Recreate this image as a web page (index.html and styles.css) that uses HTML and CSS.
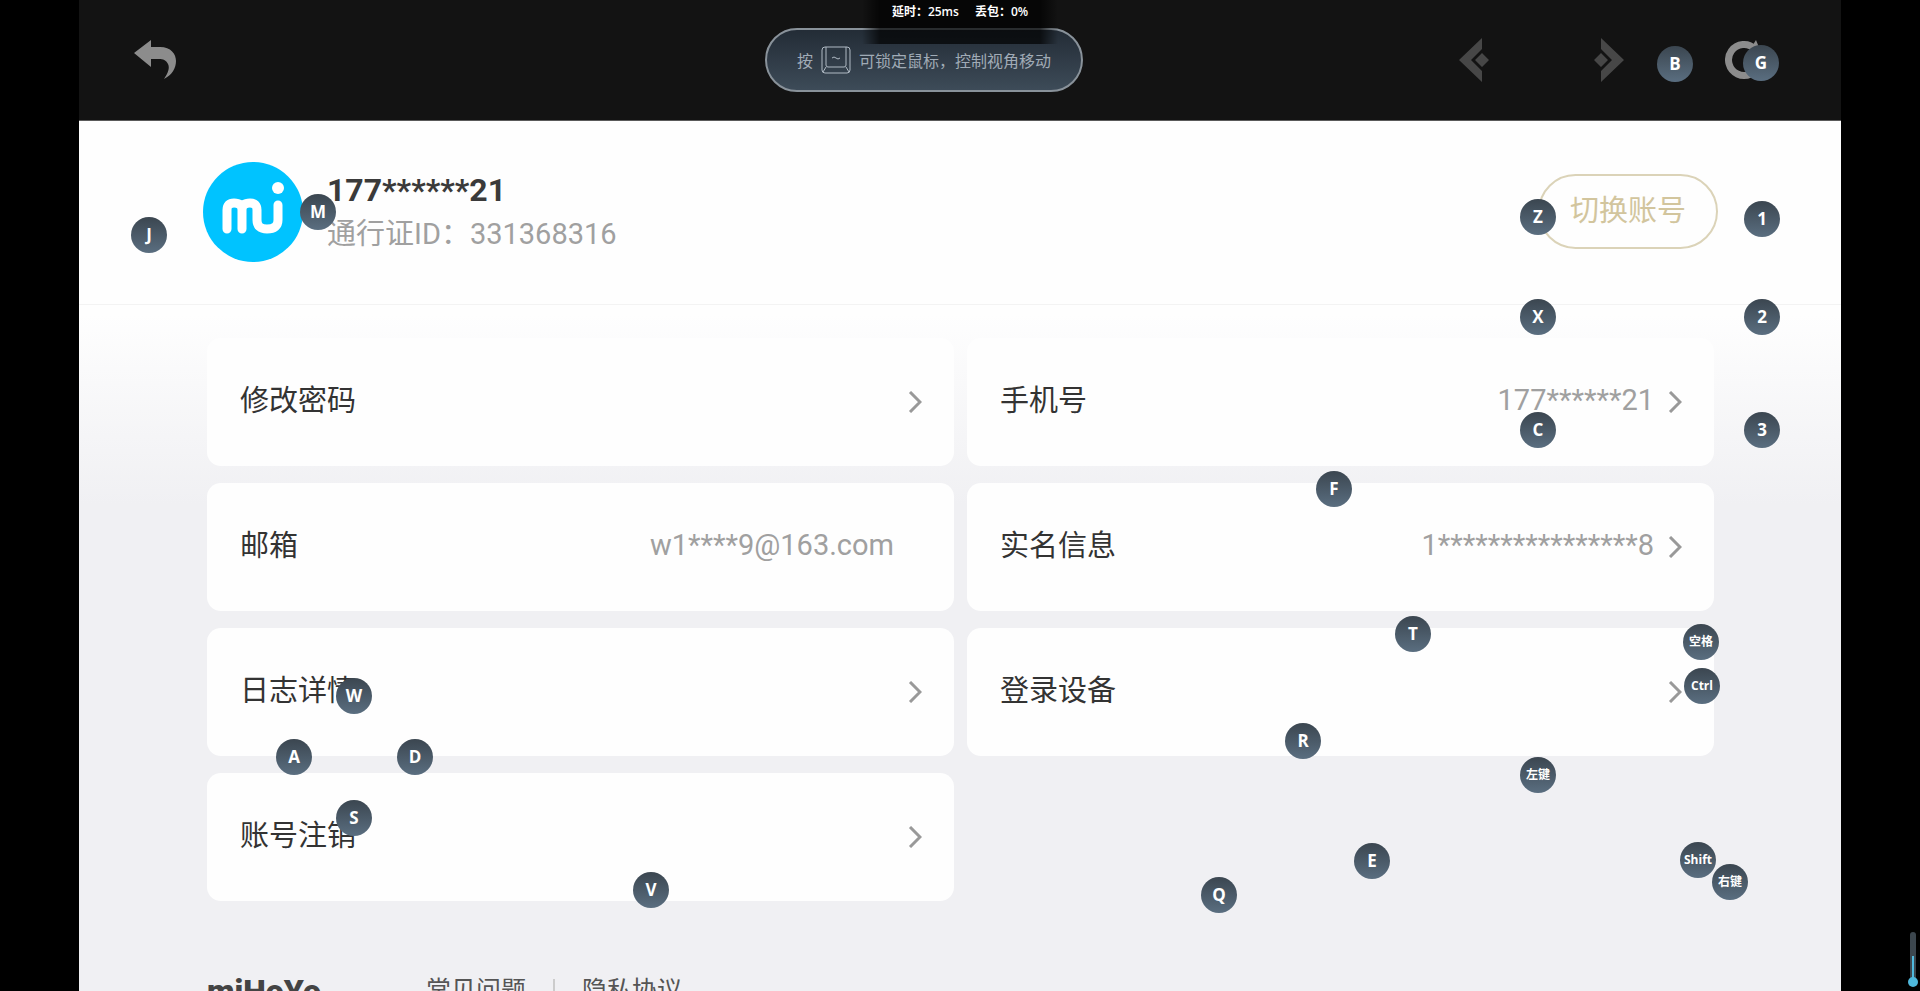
FILE: index.html
```
<!DOCTYPE html>
<html lang="zh-CN">

<head>
    <meta charset="UTF-8">
    <meta name="viewport" content="width=device-width, initial-scale=1.0">
    <title>账号管理</title>
    <link rel="stylesheet" href="styles.css">
</head>

<body>
    <div class="stage">
        <header class="topbar">
            <button class="icon-btn" aria-label="返回">
                <svg width="42" height="40" viewBox="0 0 42 40">
                    <path fill="#8c8c8c" d="M0 13 L17 0 V7 H26 C37 7 42 14 42 21 C42 28 38 35 30 39 C34 33 36 28 34 24 C32 20 29 19 25 19 H17 V27 Z" />
                </svg>
            </button>
            <nav class="topbar-nav">
                <button class="icon-btn" aria-label="后退">
                    <svg width="32" height="44" viewBox="0 0 32 44">
                        <path fill="#474747" d="M23 0 V11 L12 22 L23 33 V44 L0 22 Z M23 15 L30 22 L23 29 L16 22 Z" />
                    </svg>
                </button>
                <button class="icon-btn" aria-label="前进">
                    <svg width="32" height="44" viewBox="0 0 32 44">
                        <path fill="#474747" d="M9 0 V11 L20 22 L9 33 V44 L32 22 Z M9 15 L2 22 L9 29 L16 22 Z" />
                    </svg>
                </button>
                <button class="icon-btn" aria-label="刷新">
                    <svg width="40" height="40" viewBox="0 0 40 40">
                        <path fill="none" stroke="#8c8c8c" stroke-width="7" d="M30 9 A15.5 15.5 0 1 0 34 24" />
                        <path fill="#8c8c8c" d="M31 0 L37 15 L23 13 Z" />
                    </svg>
                </button>
            </nav>
        </header>

        <section class="profile">
            <svg class="avatar" width="100" height="100" viewBox="0 0 100 100">
                <circle cx="50" cy="50" r="50" fill="#00c3ff" />
                <path fill="none" stroke="#fff" stroke-width="9" stroke-linecap="round" stroke-linejoin="round" d="M24 67 V48 Q24 41 31 41 Q39 41 39 48 V67 M39 48 Q39 41 47 41 Q54 41 54 48 V58 Q54 67 64 67 Q75 67 75 58 V43" />
                <circle cx="75" cy="26" r="6" fill="#fff" />
            </svg>
            <div class="profile-info">
                <h1>177******21</h1>
                <p>通行证ID：331368316</p>
            </div>
            <button class="switch-btn">切换账号</button>
        </section>

        <main class="account">
            <div class="cards">
                <a class="card" href="#">
                    <span class="label">修改密码</span>
                    <svg class="chevron" viewBox="0 0 14 22"><path d="M2 1 L12 11 L2 21" /></svg>
                </a>
                <a class="card" href="#">
                    <span class="label">手机号</span>
                    <span class="value">177******21</span>
                    <svg class="chevron" viewBox="0 0 14 22"><path d="M2 1 L12 11 L2 21" /></svg>
                </a>
                <div class="card">
                    <span class="label">邮箱</span>
                    <span class="value">w1****9@163.com</span>
                    <span class="chevron"></span>
                </div>
                <a class="card" href="#">
                    <span class="label">实名信息</span>
                    <span class="value">1****************8</span>
                    <svg class="chevron" viewBox="0 0 14 22"><path d="M2 1 L12 11 L2 21" /></svg>
                </a>
                <a class="card" href="#">
                    <span class="label">日志详情</span>
                    <svg class="chevron" viewBox="0 0 14 22"><path d="M2 1 L12 11 L2 21" /></svg>
                </a>
                <a class="card" href="#">
                    <span class="label">登录设备</span>
                    <svg class="chevron" viewBox="0 0 14 22"><path d="M2 1 L12 11 L2 21" /></svg>
                </a>
                <a class="card" href="#">
                    <span class="label">账号注销</span>
                    <svg class="chevron" viewBox="0 0 14 22"><path d="M2 1 L12 11 L2 21" /></svg>
                </a>
            </div>
            <footer class="footer">
                <span class="brand">miHoYo</span>
                <a href="#">常见问题</a>
                <span class="separator"></span>
                <a href="#">隐私协议</a>
            </footer>
        </main>
    </div>

    <!-- mouse lock hint and network status -->
    <div class="hint">
        <span>按</span>
        <svg width="30" height="28" viewBox="0 0 30 28" fill="none" stroke="#b0bac4">
            <rect x="1" y="1" width="28" height="26" rx="3" />
            <path d="M5 1 V19 Q5 21 7 21 H23 Q25 21 25 19 V1 M5 21 L2 26 M25 21 L28 26" />
            <path d="M11 12 Q13 10 15 12 T19 12" />
        </svg>
        <span>可锁定鼠标，控制视角移动</span>
    </div>
    <div class="network">
        <span>延时：25ms</span>
        <span>丢包：0%</span>
    </div>

    <!-- keyboard mapping -->
    <div class="keys">
        <span class="key key-j">J</span>
        <span class="key key-m">M</span>
        <span class="key key-b">B</span>
        <span class="key key-g">G</span>
        <span class="key key-z">Z</span>
        <span class="key key-x">X</span>
        <span class="key key-c">C</span>
        <span class="key key-1">1</span>
        <span class="key key-2">2</span>
        <span class="key key-3">3</span>
        <span class="key key-f">F</span>
        <span class="key key-t">T</span>
        <span class="key key-r">R</span>
        <span class="key key-e">E</span>
        <span class="key key-q">Q</span>
        <span class="key key-v">V</span>
        <span class="key key-w">W</span>
        <span class="key key-a">A</span>
        <span class="key key-s">S</span>
        <span class="key key-d">D</span>
        <span class="key key-small key-space">空格</span>
        <span class="key key-small key-ctrl">Ctrl</span>
        <span class="key key-small key-left">左键</span>
        <span class="key key-small key-shift">Shift</span>
        <span class="key key-small key-right">右键</span>
    </div>

    <svg class="thermo" width="14" height="58" viewBox="0 0 14 58">
        <rect x="4" y="1" width="6" height="50" rx="3" fill="#3c464e" />
        <rect x="6" y="25" width="2" height="26" fill="#4fb8dc" />
        <circle cx="7" cy="51" r="5" fill="#4fb8dc" />
    </svg>
</body>

</html>
```

FILE: styles.css
```
* {
    box-sizing: border-box;
}

body {
    margin: 0;
    height: 100vh;
    position: relative;
    overflow: hidden;
    background-color: #000;
    font-family: Roboto, "Noto Sans CJK SC", sans-serif;
}

h1,
p {
    margin: 0;
}

button {
    border: none;
    background: none;
    padding: 0;
    font-family: inherit;
    cursor: pointer;
}

a {
    color: inherit;
    text-decoration: none;
}

svg {
    display: block;
}

.stage {
    height: 100vh;
    margin: 0 79px;
    overflow: hidden;
    display: flex;
    flex-direction: column;
    background-color: #f0f0f3;
}

.topbar {
    flex: none;
    height: 121px;
    padding: 0 76px 0 55px;
    display: flex;
    align-items: center;
    justify-content: space-between;
    background-color: #131313;
    border-bottom: 1px solid #5a5a5a;
}

.topbar-nav {
    display: flex;
    align-items: center;
    gap: 101px;
}

.profile {
    flex: none;
    height: 184px;
    padding: 0 123px 2px 124px;
    display: flex;
    align-items: center;
    background-color: #fefefe;
    border-bottom: 1px solid #f3f3f3;
}

.profile-info {
    flex: 1;
    margin-left: 24px;
}

.profile-info h1 {
    font-size: 32px;
    line-height: 44px;
    font-weight: bold;
    color: #3a3a3a;
}

.profile-info p {
    font-size: 29px;
    line-height: 44px;
    color: #a0a0a0;
}

.switch-btn {
    width: 180px;
    height: 75px;
    padding-bottom: 8px;
    border: 2px solid #dbd3b8;
    border-radius: 38px;
    font-size: 29px;
    color: #d2c59d;
}

.account {
    flex: 1;
    padding: 33px 127px 0 128px;
    background: linear-gradient(#fefefe 10px, #f0f0f3 200px);
}

.cards {
    display: grid;
    grid-template-columns: 1fr 1fr;
    grid-auto-rows: 128px;
    gap: 17px 13px;
}

.card {
    padding: 0 32px 0 33px;
    display: flex;
    align-items: center;
    gap: 14px;
    font-size: 29px;
    border-radius: 14px;
    background-color: #fefefe;
}

.label,
.value {
    padding-bottom: 8px;
}

.label {
    flex: 1;
    color: #333;
}

.value {
    padding-bottom: 4px;
    color: #a0a0a0;
}

.chevron {
    width: 14px;
    height: 22px;
    fill: none;
    stroke: #999;
    stroke-width: 3;
}

.footer {
    margin-top: 65px;
    display: flex;
    align-items: center;
    font-size: 25px;
    line-height: 50px;
    color: #555;
}

.brand {
    width: 219px;
    font-size: 32px;
    font-weight: 900;
    color: #444;
}

.separator {
    width: 2px;
    height: 24px;
    margin: 0 27px;
    background-color: #ccc;
}

.hint {
    position: absolute;
    top: 28px;
    left: calc(50% - 195px);
    height: 64px;
    padding: 0 30px;
    display: flex;
    align-items: center;
    gap: 8px;
    border: 2px solid #89929a;
    border-radius: 32px;
    background: linear-gradient(#232c36, #3d4b58);
    font-size: 16px;
    color: #a0abb6;
}

.network {
    position: absolute;
    top: 0;
    left: 50%;
    transform: translateX(-50%);
    width: 196px;
    height: 44px;
    padding-top: 3px;
    display: flex;
    justify-content: center;
    gap: 16px;
    background: linear-gradient(90deg, transparent, rgba(0, 0, 0, 0.7) 18px, rgba(0, 0, 0, 0.7) 178px, transparent);
    font-family: "Open Sans", "Noto Sans CJK SC", sans-serif;
    font-size: 12px;
    line-height: 18px;
    font-weight: 600;
    color: #fff;
}

.key {
    position: absolute;
    width: 36px;
    height: 36px;
    border-radius: 50%;
    background: linear-gradient(#3b4650, #5a6e80);
    font-family: "Open Sans", "Noto Sans CJK SC", sans-serif;
    font-size: 17px;
    line-height: 36px;
    font-weight: bold;
    text-align: center;
    color: #fff;
}

.key-small {
    font-size: 12px;
}

.key-j { left: 131px; top: 217px; }
.key-m { left: 300px; top: 194px; }
.key-b { left: 1657px; top: 46px; }
.key-g { left: 1743px; top: 45px; }
.key-z { left: 1520px; top: 199px; }
.key-x { left: 1520px; top: 299px; }
.key-c { left: 1520px; top: 412px; }
.key-1 { left: 1744px; top: 201px; }
.key-2 { left: 1744px; top: 299px; }
.key-3 { left: 1744px; top: 412px; }
.key-f { left: 1316px; top: 471px; }
.key-t { left: 1395px; top: 616px; }
.key-r { left: 1285px; top: 723px; }
.key-e { left: 1354px; top: 843px; }
.key-q { left: 1201px; top: 877px; }
.key-v { left: 633px; top: 872px; }
.key-w { left: 336px; top: 678px; }
.key-a { left: 276px; top: 739px; }
.key-s { left: 336px; top: 800px; }
.key-d { left: 397px; top: 739px; }
.key-space { left: 1683px; top: 624px; }
.key-ctrl { left: 1684px; top: 668px; }
.key-left { left: 1520px; top: 757px; }
.key-shift { left: 1680px; top: 842px; }
.key-right { left: 1712px; top: 864px; }

.thermo {
    position: absolute;
    right: 0;
    bottom: 2px;
}
```
